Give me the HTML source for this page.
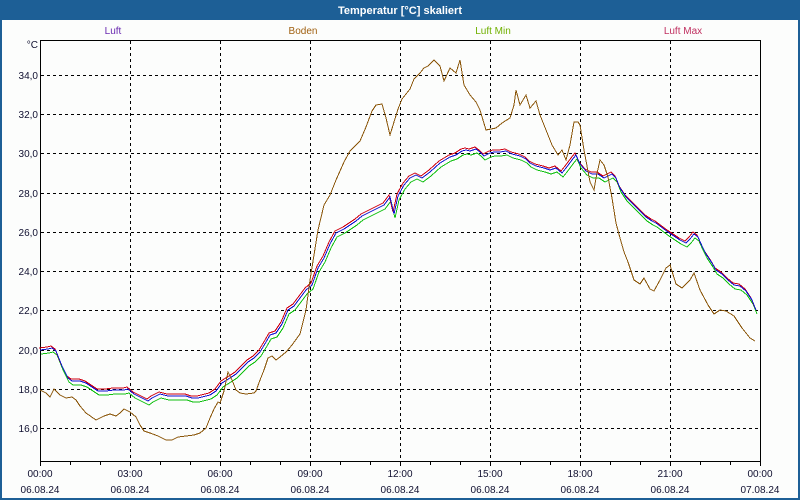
<!DOCTYPE html>
<html><head><meta charset="utf-8"><style>
html,body{margin:0;padding:0;width:800px;height:500px;overflow:hidden;background:#1d5f96;}
svg{display:block}
</style></head><body>
<svg width="800" height="500" xmlns="http://www.w3.org/2000/svg" font-family="'Liberation Sans',sans-serif" font-size="10">
<rect x="0" y="0" width="800" height="500" fill="#1d5f96"/>
<rect x="2" y="20" width="796" height="478" fill="#fcfdfc"/>
<text x="400" y="14" text-anchor="middle" fill="#fff" font-weight="bold" font-size="11">Temperatur [°C] skaliert</text>
<text x="113" y="34" text-anchor="middle" fill="#6a2ab0">Luft</text>
<text x="303" y="34" text-anchor="middle" fill="#a06010">Boden</text>
<text x="493" y="34" text-anchor="middle" fill="#70b000">Luft Min</text>
<text x="683" y="34" text-anchor="middle" fill="#c03060">Luft Max</text>
<g stroke="#000" stroke-width="1" stroke-dasharray="3,3" fill="none" shape-rendering="crispEdges">
<path d="M130.5 41V461M220.5 41V461M310.5 41V461M400.5 41V461M490.5 41V461M580.5 41V461M670.5 41V461"/>
<path d="M41 75.5H760M41 114.5H760M41 153.5H760M41 193.5H760M41 232.5H760M41 271.5H760M41 310.5H760M41 350.5H760M41 389.5H760M41 428.5H760"/>
</g>
<path d="M40.5 40.5H760.5V461.5H40.5Z" fill="none" stroke="#000" stroke-width="1" shape-rendering="crispEdges"/>
<path shape-rendering="crispEdges" d="M40.5 461V466M70.5 461V465M100.5 461V465M130.5 461V466M160.5 461V465M190.5 461V465M220.5 461V466M250.5 461V465M280.5 461V465M310.5 461V466M340.5 461V465M370.5 461V465M400.5 461V466M430.5 461V465M460.5 461V465M490.5 461V466M520.5 461V465M550.5 461V465M580.5 461V466M610.5 461V465M640.5 461V465M670.5 461V466M700.5 461V465M730.5 461V465M760.5 461V466" stroke="#000"/>
<g fill="#101030" text-anchor="end">
<text x="38" y="48">°C</text>
<text x="38" y="79">34,0</text><text x="38" y="118">32,0</text><text x="38" y="157">30,0</text><text x="38" y="197">28,0</text><text x="38" y="236">26,0</text><text x="38" y="275">24,0</text><text x="38" y="314">22,0</text><text x="38" y="354">20,0</text><text x="38" y="393">18,0</text><text x="38" y="432">16,0</text>
</g>
<g fill="#101030" text-anchor="middle">
<text x="40" y="477">00:00</text><text x="130" y="477">03:00</text><text x="220" y="477">06:00</text><text x="310" y="477">09:00</text><text x="400" y="477">12:00</text><text x="490" y="477">15:00</text><text x="580" y="477">18:00</text><text x="670" y="477">21:00</text><text x="760" y="477">00:00</text>
<text x="40" y="493">06.08.24</text><text x="130" y="493">06.08.24</text><text x="220" y="493">06.08.24</text><text x="310" y="493">06.08.24</text><text x="400" y="493">06.08.24</text><text x="490" y="493">06.08.24</text><text x="580" y="493">06.08.24</text><text x="670" y="493">06.08.24</text><text x="760" y="493">07.08.24</text>
</g>
<defs>
<polyline id="luft" fill="none" points="40,350 48,349 52,348 56,351 62,366 68,378 72,381 80,381 86,383 92,387 98,391 106,391 114,390 124,390 128,389 134,394 142,398 148,401 152,398 160,394 164,395 168,396 176,396 186,396 192,398 198,398 206,396 210,395 216,391 222,383 230,378 236,374 242,368 248,362 254,358 260,352 266,342 270,335 276,333 282,324 288,310 294,306 300,298 306,290 312,285 318,268 324,258 330,244 336,233 344,229 350,225 356,221 362,216 368,213 374,210 380,207 384,205 390,197 394,214 398,196 404,185 410,178 416,175 422,178 430,172 440,163 450,157 456,155 462,151 466,150 470,151 476,149 480,152 484,156 490,153 494,152 500,152 506,151 512,154 520,156 526,159 530,163 536,166 544,168 550,170 556,168 562,173 566,168 572,160 576,155 580,164 586,171 592,174 598,174 604,178 608,176 612,174 616,178 620,188 626,197 632,203 640,211 646,217 652,221 656,223 660,226 664,229 668,232 674,236 680,240 686,243 690,239 694,234 698,237 702,246 706,254 712,263 716,270 722,274 728,280 734,285 740,286 746,291 752,300 756,310"/>
</defs>
<g shape-rendering="crispEdges">
<use href="#luft" stroke="#10c010" transform="translate(1,4)"/>
<use href="#luft" stroke="#d00010" transform="translate(-1,-2)"/>
<use href="#luft" stroke="#1010d0"/>
<polyline fill="none" stroke="#8a5508" points="40,390 46,393 50,397 54,389 60,395 66,398 72,397 76,400 80,406 86,413 96,420 104,416 110,414 116,416 120,413 124,409 130,412 136,417 140,425 144,431 150,433 158,436 166,440 172,440 178,437 186,436 194,435 200,433 206,428 210,418 214,409 218,402 220,403 224,391 228,372 232,380 236,390 240,393 246,394 254,393 256,391 260,380 264,370 268,358 272,356 276,360 280,357 286,352 292,345 300,334 306,310 310,280 314,255 318,230 324,205 330,195 336,180 344,162 350,151 354,147 360,141 366,127 372,111 376,105 382,104 386,118 390,135 394,122 398,109 402,99 410,89 414,79 420,73 424,68 428,66 434,60 440,66 444,81 450,68 456,73 460,60 464,85 470,95 476,102 480,110 486,130 496,128 502,123 510,118 514,105 516,90 520,105 526,95 530,108 536,101 540,115 546,130 552,145 558,155 562,150 566,160 570,145 574,122 578,122 580,125 584,150 590,182 594,190 596,178 600,160 604,165 608,177 612,198 616,223 620,238 624,252 628,262 634,280 640,284 644,278 650,289 654,291 660,280 666,268 670,265 676,284 682,288 690,280 694,273 700,290 708,305 714,314 720,310 726,311 734,316 742,328 750,338 755,341"/>
</g>
</svg>
</body></html>
